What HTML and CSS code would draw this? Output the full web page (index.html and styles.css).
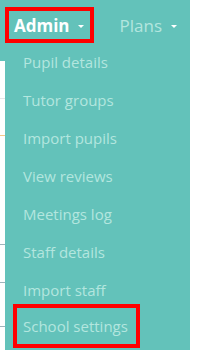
FILE: index.html
```html
<!DOCTYPE html>
<html lang="en">
<head>
    <meta charset="UTF-8">
    <meta name="viewport" content="width=device-width, initial-scale=1.0">
    <title>Admin menu</title>
    <link rel="stylesheet" href="styles.css">
</head>
<body>
    <div class="page">
        <nav class="navbar">
            <a class="nav-link active marked" href="#">Admin <span class="caret"></span></a>
            <a class="nav-link" href="#">Plans <span class="caret"></span></a>
        </nav>

        <!-- page content peeking out behind the menu -->
        <div class="content">
            <div class="rule grey" style="top: 37px"></div>
            <div class="rule orange" style="top: 74px"></div>
            <div class="rule slate" style="top: 183px"></div>
            <div class="rule slate" style="top: 221px"></div>
            <div class="rule slate" style="top: 265px"></div>
        </div>

        <ul class="dropdown">
            <li><a href="#">Pupil details</a></li>
            <li><a href="#">Tutor groups</a></li>
            <li><a href="#">Import pupils</a></li>
            <li><a href="#">View reviews</a></li>
            <li><a href="#">Meetings log</a></li>
            <li><a href="#">Staff details</a></li>
            <li><a href="#">Import staff</a></li>
            <li><a href="#"><span class="marked">School settings</span></a></li>
        </ul>
    </div>
</body>
</html>
```

FILE: styles.css
```css
body {
    margin: 0;
    background: #fff;
    font-family: 'Open Sans', 'Liberation Sans', sans-serif;
    overflow: hidden;
}

.page {
    position: relative;
    width: 190px;
    height: 350px;
    background: #fff;
}

.navbar {
    display: flex;
    align-items: flex-start;
    height: 61px;
    background: #63c2ba;
    padding: 7px 0 0 5px;
    box-sizing: border-box;
    gap: 16px;
}

.nav-link {
    font-size: 17px;
    color: #b3e6df;
    text-decoration: none;
    display: flex;
    align-items: center;
    gap: 9px;
    height: 36px;
    box-sizing: border-box;
    padding: 0 9px 0 10px;
}

.nav-link.active {
    color: #fff;
    font-weight: 700;
}

.caret {
    width: 0;
    height: 0;
    border-left: 3px solid transparent;
    border-right: 3px solid transparent;
    border-top: 3px solid #fff;
    margin-top: 2px;
}

.marked {
    border: 4px solid #f00;
}

.nav-link.marked {
    padding: 0 6px 0 5px;
    gap: 8px;
}

.content {
    position: relative;
    height: 289px;
}

.rule {
    position: absolute;
    left: 0;
    width: 10px;
    height: 1px;
}

.grey { background: #e6e6e6; }
.orange { background: #f6c98a; }
.slate { background: #9fb4bb; }

.dropdown {
    position: absolute;
    top: 43px;
    left: 5px;
    right: 0;
    bottom: 0;
    margin: 0;
    padding: 0;
    list-style: none;
    background: #63c2ba;
}

.dropdown li a {
    display: block;
    height: 38px;
    line-height: 38px;
    padding-left: 18px;
    font-size: 15px;
    color: #b3e6df;
    text-decoration: none;
}

.dropdown .marked {
    display: block;
    width: fit-content;
    box-sizing: border-box;
    height: 44px;
    line-height: 36px;
    margin: -5px 0 0 -10px;
    padding: 0 8px 0 6px;
}
```
